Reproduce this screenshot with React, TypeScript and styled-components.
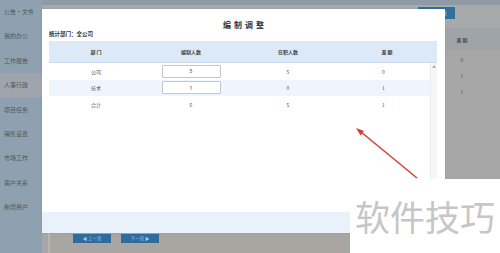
import React from "react";
import styled, { createGlobalStyle } from "styled-components";

const menu = ["公告•文件", "我的办公", "工作报告", "人事行政", "项目任务", "销售设置", "市场工作", "客户关系", "新增用户"];

const rows = [
  { dept: "公司", plan: "5", real: "5", diff: "0", edit: true },
  { dept: "技术", plan: "1", real: "0", diff: "1", edit: true },
  { dept: "合计", plan: "6", real: "5", diff: "1", edit: false },
];

const App = () => {
  return (
    <Page>
      <GlobalStyle />
      <Sidebar>
        {menu.map((m) => (
          <MenuItem key={m} active={m === "人事行政"}>
            {m}
          </MenuItem>
        ))}
      </Sidebar>
      <Main>
        <TopStrip />
        <Toolbar>
          <ToolButton>新增编制</ToolButton>
        </Toolbar>
        {/* only the last column of the page table shows beside the dialog */}
        <BgHead>
          <BgCell>差 额</BgCell>
        </BgHead>
        {rows.map((r) => (
          <BgRow key={r.dept}>
            <BgCell>{r.diff}</BgCell>
          </BgRow>
        ))}
        <Filler />
        <Pager>
          <PageButton>◀ 上一页</PageButton>
          <PageButton>下一页 ▶</PageButton>
        </Pager>
      </Main>

      <Modal>
        <ModalTitle>编制调整</ModalTitle>
        <DeptLine>统计部门：全公司</DeptLine>
        <TableWrap>
          <HeadRow>
            <span>部 门</span>
            <span>编制人数</span>
            <span>在职人数</span>
            <span>差 额</span>
          </HeadRow>
          <BodyArea>
            <Rows>
              {rows.map((r, i) => (
                <Row key={r.dept} striped={i % 2 === 1}>
                  <span>{r.dept}</span>
                  <span>{r.edit ? <CellInput defaultValue={r.plan} /> : r.plan}</span>
                  <span>{r.real}</span>
                  <span>{r.diff}</span>
                </Row>
              ))}
            </Rows>
            <ScrollTrack>
              <ScrollArrow>▲</ScrollArrow>
            </ScrollTrack>
          </BodyArea>
        </TableWrap>
        <ModalFooter />
      </Modal>

      <Arrow width="500" height="253" viewBox="0 0 500 253">
        <line x1="417" y1="178" x2="361" y2="132" stroke="#d6403c" strokeWidth="1.6" />
        <polygon points="356,128 364,131 360.5,135.5" fill="#d6403c" />
      </Arrow>

      <Watermark>软件技巧</Watermark>
    </Page>
  );
};

export default App;

const GlobalStyle = createGlobalStyle`
  body {
    margin: 0;
    font-family: "Noto Sans CJK SC", "Noto Sans", sans-serif;
  }
`;

const Page = styled.div`
  position: relative;
  width: 500px;
  height: 253px;
  overflow: hidden;
  display: flex;
`;

const Sidebar = styled.div`
  width: 42px;
  background-color: #8fa1b0;
  display: flex;
  flex-direction: column;
`;

const MenuItem = styled.div<{ active?: boolean }>`
  height: 24.4px;
  line-height: 24.4px;
  padding-left: 4px;
  font-size: 6px;
  color: #4b5661;
  white-space: nowrap;
  background-color: ${(p) => (p.active ? "#a0a4ac" : "transparent")};
`;

const Main = styled.div`
  flex: 1;
  display: flex;
  flex-direction: column;
  background-color: #a7a7a7;
`;

const TopStrip = styled.div`
  height: 5px;
  background-color: #8f9aa4;
`;

const Toolbar = styled.div`
  height: 23px;
  display: flex;
  justify-content: flex-end;
  padding-right: 45px;
  background-color: #a8a9aa;
`;

const ToolButton = styled.div`
  margin-top: 2px;
  width: 37px;
  height: 12px;
  background-color: #30709f;
  color: #b9cfe0;
  font-size: 5px;
  line-height: 12px;
  text-align: center;
`;

const BgHead = styled.div`
  height: 22px;
  display: flex;
  justify-content: flex-end;
  align-items: center;
  padding-right: 18px;
  background-color: #9fa4a9;
  font-size: 5px;
  font-weight: bold;
  color: #4d5257;
  margin-bottom: 1px;
`;

const BgRow = styled.div`
  height: 16px;
  display: flex;
  justify-content: flex-end;
  align-items: center;
  padding-right: 18px;
  font-size: 5px;
  color: #555;
`;

const BgCell = styled.span`
  width: 40px;
  text-align: center;
`;

const Filler = styled.div`
  flex: 1;
`;

const Pager = styled.div`
  height: 20px;
  display: flex;
  gap: 10px;
  padding: 1px 0 0 23px;
  box-sizing: border-box;
  background-color: #a9a5a1;
  border-left: 2px solid #b8b6b3;
  margin-left: 6px;
`;

const PageButton = styled.div`
  width: 38px;
  height: 9px;
  background-color: #2f6c9e;
  color: #a9c4dc;
  font-size: 4.5px;
  line-height: 9px;
  text-align: center;
`;

const Modal = styled.div`
  position: absolute;
  left: 42px;
  top: 9px;
  width: 403px;
  height: 224px;
  background-color: #fff;
  display: flex;
  flex-direction: column;
  box-shadow: 0 0 2px rgba(0, 0, 0, 0.1);
`;

const ModalTitle = styled.div`
  padding-top: 11px;
  height: 10px;
  line-height: 10px;
  font-size: 8px;
  font-weight: bold;
  letter-spacing: 3px;
  padding-left: 3px;
  color: #333;
  text-align: center;
`;

const DeptLine = styled.div`
  height: 8px;
  line-height: 8px;
  margin: 0 7px;
  font-size: 5.5px;
  font-weight: bold;
  color: #333;
`;

const TableWrap = styled.div`
  flex: 1;
  margin: 3px 8px 0 7px;
  display: flex;
  flex-direction: column;
`;

const HeadRow = styled.div`
  height: 21px;
  display: grid;
  grid-template-columns: 94px 96px 98px 100px;
  align-items: center;
  background-color: #dde9f6;
  border-bottom: 1px solid #cadcee;
  font-size: 5px;
  font-weight: bold;
  color: #444;
  text-align: center;
  white-space: pre;
`;

const BodyArea = styled.div`
  flex: 1;
  display: flex;
`;

const Rows = styled.div`
  flex: 1;
`;

const Row = styled.div<{ striped?: boolean }>`
  height: 16.5px;
  display: grid;
  grid-template-columns: 94px 96px 98px 93px;
  align-items: center;
  background-color: ${(p) => (p.striped ? "#eff5fc" : "#fff")};
  font-size: 5px;
  color: #555;
  text-align: center;
`;

const CellInput = styled.input`
  display: block;
  margin: 0 auto;
  width: 59px;
  height: 13px;
  box-sizing: border-box;
  border: 1px solid #c6c6c6;
  border-radius: 1px;
  padding: 0;
  font-size: 5px;
  color: #444;
  text-align: center;
  font-family: "Noto Sans", sans-serif;
`;

const ScrollTrack = styled.div`
  width: 7px;
  background-color: #f6f6f6;
  border-left: 1px solid #ececec;
  text-align: center;
`;

const ScrollArrow = styled.div`
  font-size: 3.5px;
  line-height: 8px;
  color: #a0a0a0;
`;

const ModalFooter = styled.div`
  height: 21px;
  background-color: #e9f1fa;
`;

const Arrow = styled.svg`
  position: absolute;
  left: 0;
  top: 0;
  pointer-events: none;
`;

const Watermark = styled.div`
  position: absolute;
  right: 0;
  bottom: 0;
  width: 150px;
  height: 74px;
  background-color: #fff;
  color: #c6c6c6;
  font-size: 35px;
  line-height: 74px;
  padding-left: 5px;
  box-sizing: border-box;
  white-space: nowrap;
`;
